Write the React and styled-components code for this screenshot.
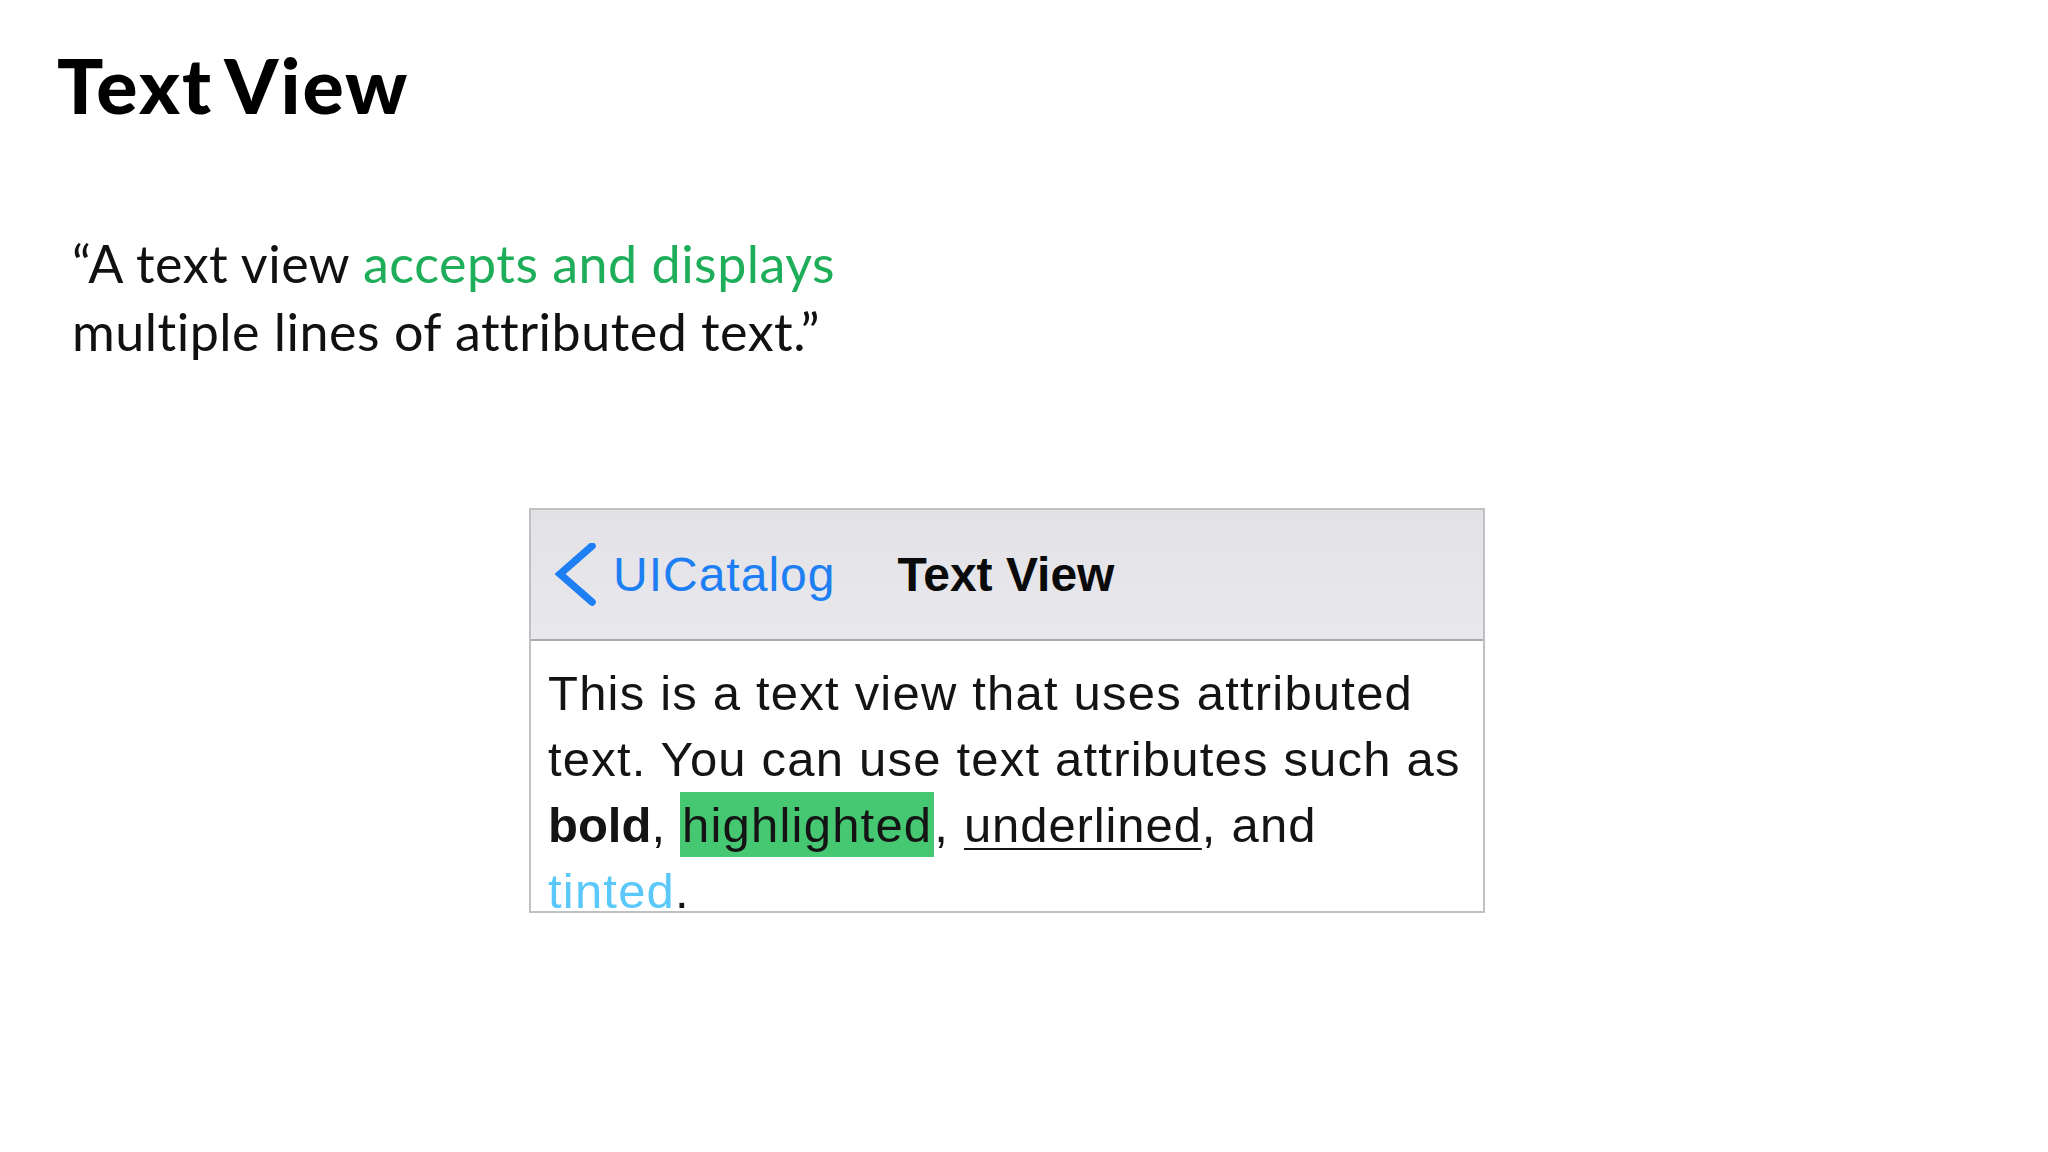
import React from "react";
import styled, { createGlobalStyle } from "styled-components";

const GlobalStyle = createGlobalStyle`
  html, body {
    margin: 0;
    padding: 0;
    background: #ffffff;
  }
  body {
    width: 2048px;
    height: 1152px;
    overflow: hidden;
  }
`;

const Slide = styled.main`
  display: flex;
  flex-direction: column;
  padding: 46px 0 0 57px;
  font-family: "Lato", "Open Sans", sans-serif;
  color: #000;
`;

const Title = styled.h1`
  margin: 0;
  font-size: 77px;
  line-height: 77px;
  font-weight: 900;
  letter-spacing: 2px;
  word-spacing: -6px;
`;

const Quote = styled.p`
  margin: 106px 0 0 15px;
  font-size: 52px;
  line-height: 68px;
  font-weight: 400;
  letter-spacing: 0.5px;
  color: #111;
`;

const Accent = styled.span`
  color: #1eae5a;
`;

const Phone = styled.section`
  display: flex;
  flex-direction: column;
  width: 952px;
  height: 401px;
  margin: 143px 0 0 472px;
  border: 2px solid #c0c0c3;
  font-family: "Liberation Sans", Arial, sans-serif;
  overflow: hidden;
`;

const NavBar = styled.header`
  display: flex;
  align-items: center;
  flex: 0 0 129px;
  padding-left: 24px;
  background: linear-gradient(#e2e1e6, #e9e8ec);
  border-bottom: 2px solid #a9a9ad;
`;

const BackButton = styled.div`
  display: flex;
  align-items: center;
  gap: 16px;
  color: #1d7ff3;
  font-size: 48px;
  letter-spacing: 1px;
`;

const NavTitle = styled.div`
  margin-left: 62px;
  font-size: 48px;
  font-weight: 700;
  color: #0a0a0a;
`;

const TextArea = styled.div`
  flex: 1;
  padding: 19px 8px 0 17px;
  background: #ffffff;
  font-size: 49px;
  line-height: 66px;
  letter-spacing: 1.2px;
  color: #141414;
  overflow: hidden;
`;

const Bold = styled.strong`
  font-weight: 700;
  letter-spacing: 0;
`;

const Highlight = styled.span`
  background: #46c873;
  padding: 6px 2px 5px 2px;
  margin-left: -1px;
`;

const Underlined = styled.span`
  text-decoration: underline;
  text-decoration-thickness: 2px;
  text-underline-offset: 6px;
  letter-spacing: 0.9px;
`;

const Tinted = styled.span`
  color: #5ac8fa;
`;

function Chevron() {
  return (
    <svg width="42" height="64" viewBox="0 0 42 64" aria-hidden="true">
      <polyline
        points="37,3 5,31 37,59"
        fill="none"
        stroke="#1d7ff3"
        strokeWidth="7.5"
        strokeLinecap="round"
        strokeLinejoin="miter"
      />
    </svg>
  );
}

export default function App() {
  return (
    <>
      <GlobalStyle />
      <Slide>
        <Title>Text View</Title>
        <Quote>
          “A text view <Accent>accepts and displays</Accent>
          <br />
          multiple lines of attributed text.”
        </Quote>
        <Phone>
          <NavBar>
            <BackButton>
              <Chevron />
              UICatalog
            </BackButton>
            <NavTitle>Text View</NavTitle>
          </NavBar>
          <TextArea>
            This is a text view that uses attributed text. You can use text
            attributes such as <Bold>bold</Bold>,{" "}
            <Highlight>highlighted</Highlight>, <Underlined>underlined</Underlined>,
            and
            <br />
            <Tinted>tinted</Tinted>.
          </TextArea>
        </Phone>
      </Slide>
    </>
  );
}
